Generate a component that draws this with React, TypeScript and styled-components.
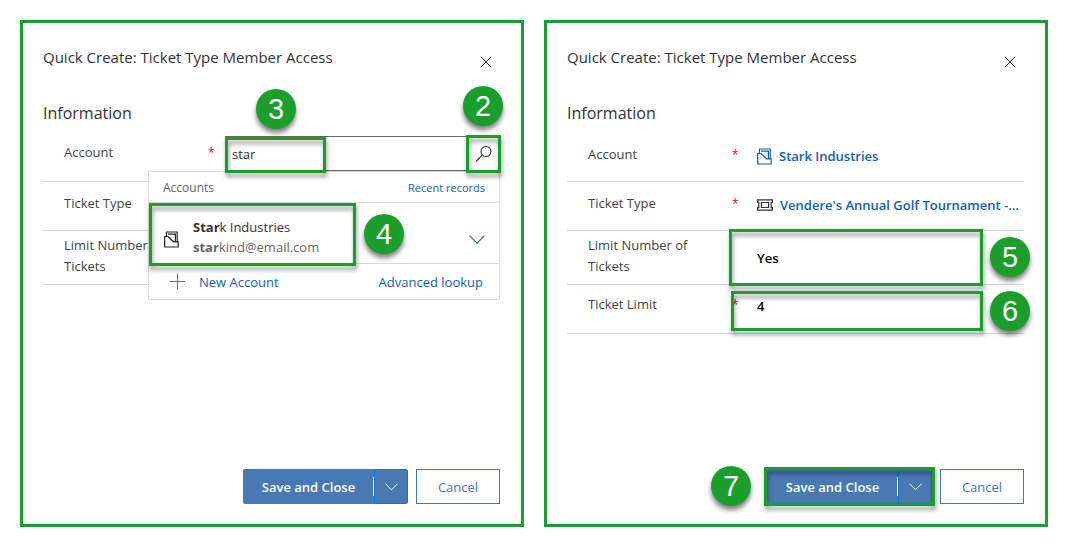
import React from "react";
import styled, { createGlobalStyle, css } from "styled-components";

const GREEN = "#1c9e2c";
const LINK = "#1160b7";
const BLUE = "#4879b3";

const GlobalStyle = createGlobalStyle`
  *, *::before, *::after { box-sizing: border-box; }
  body { margin: 0; background: #fff; }
  body, button, input, select {
    font-family: "Open Sans", "Noto Sans", sans-serif;
    font-size: 13px;
  }
`;

const Page = styled.main`
  display: grid;
  grid-template-columns: 1fr 1fr;
  gap: 20px;
  min-height: 100vh;
  padding: 20px;
`;

const Panel = styled.section`
  display: flex;
  flex-direction: column;
  min-width: 0;
  padding: 20px 21px 20px 20px;
  border: 3px solid ${GREEN};
  color: #3b3a39;
`;

const Header = styled.header`
  display: flex;
  justify-content: space-between;
  align-items: flex-start;
  padding-top: 2px;
`;

const Title = styled.h1`
  margin: 0;
  font-size: 15px;
  line-height: 24px;
  font-weight: 400;
  color: #333;
`;

const CloseButton = styled.button`
  display: grid;
  place-items: center;
  width: 28px;
  height: 28px;
  margin-top: 3px;
  padding: 0;
  border: 0;
  background: none;
`;

const SectionTitle = styled.h2`
  margin: 25px 0 8px;
  font-size: 16px;
  line-height: 24px;
  font-weight: 400;
  color: #333;
`;

const rowHeights = { normal: 49, raised: 49, tall: 54 };
const rowPaddings = { normal: 11, raised: 9, tall: 4 };

const Row = styled.div<{ $kind?: "normal" | "raised" | "tall" }>`
  position: relative;
  display: grid;
  grid-template-columns: 161px 21px minmax(0, 1fr);
  height: ${(p) => rowHeights[p.$kind ?? "normal"]}px;
  padding-top: ${(p) => rowPaddings[p.$kind ?? "normal"]}px;
  border-bottom: 1px solid #d6d6d6;
`;

const Label = styled.label`
  padding: 0 30px 0 21px;
  line-height: 21px;
  color: #444;
`;

const Required = styled.span`
  padding-left: 4px;
  font-size: 12px;
  line-height: 21px;
  color: #e00b1c;
`;

const Value = styled.div`
  display: flex;
  align-items: center;
  gap: 7px;
  height: 24px;
  padding-left: 8px;
`;

const RecordLink = styled.a`
  overflow: hidden;
  font-weight: 600;
  white-space: nowrap;
  text-decoration: none;
  color: ${LINK};
`;

const fieldText = css`
  width: 100%;
  padding: 0;
  border: 0;
  outline: 0;
  background: none;
  font-weight: 600;
  color: #000;
`;

const ChoiceField = styled.select`
  ${fieldText}
  height: 46px;
  align-self: flex-start;
  appearance: none;
`;

const NumberField = styled.input`
  ${fieldText}
  height: 22px;
`;

const SearchBox = styled.div`
  position: relative;
  display: flex;
  height: 35px;
  margin-top: -6px;
  border: 1px solid #666;
`;

const SearchInput = styled.input`
  flex: 1;
  min-width: 0;
  padding: 0 7px 0 6px;
  border: 0;
  outline: 0;
  background: none;
  color: #333;
`;

const SearchButton = styled.button`
  position: relative;
  display: grid;
  place-items: center;
  width: 33px;
  padding: 0;
  border: 0;
  background: none;
`;

const Flyout = styled.div`
  position: absolute;
  z-index: 2;
  top: 38px;
  right: 0;
  left: 105px;
  border: 1px solid #dcdcdc;
  background: #fff;
`;

const FlyoutHead = styled.div`
  display: flex;
  justify-content: space-between;
  align-items: center;
  height: 31px;
  padding: 0 14px;
  border-bottom: 1px solid #dcdcdc;
  font-size: 12px;
  color: #666;
`;

const TextLink = styled.a<{ $small?: boolean }>`
  display: flex;
  align-items: center;
  gap: 13px;
  font-size: ${(p) => (p.$small ? 11 : 13)}px;
  text-decoration: none;
  color: ${LINK};
`;

const Result = styled.div`
  position: relative;
  display: flex;
  align-items: center;
  gap: 14px;
  height: 61px;
  padding: 0 14px 0 15px;
  border-bottom: 1px solid #dcdcdc;
`;

const ResultIcon = styled.span`
  display: flex;
  padding-top: 12px;
`;

const ResultText = styled.div`
  flex: 1;
  padding-top: 8px;
  line-height: 20px;
  color: #333;
`;

const ResultDetail = styled.div`
  color: #666;
`;

const IconButton = styled.button`
  display: grid;
  place-items: center;
  padding: 12px 0 0;
  border: 0;
  background: none;
`;

const FlyoutFoot = styled.div`
  display: flex;
  justify-content: space-between;
  align-items: center;
  height: 35px;
  padding: 0 16px 0 20px;
`;

const Footer = styled.footer`
  display: flex;
  justify-content: flex-end;
  gap: 8px;
  margin-top: auto;
`;

const SplitButton = styled.div`
  position: relative;
  display: flex;
  height: 35px;
`;

const SaveButton = styled.button`
  position: relative;
  width: 131px;
  padding: 0;
  border: 0;
  border-radius: 2px 0 0 2px;
  background: ${BLUE};
  font-weight: 600;
  color: #fff;

  &::after {
    content: "";
    position: absolute;
    top: 8px;
    right: 0;
    bottom: 8px;
    width: 1px;
    background: #fff;
  }
`;

const MoreButton = styled.button`
  display: grid;
  place-items: center;
  width: 34px;
  padding: 0;
  border: 1px solid #0f74cf;
  border-radius: 0 2px 2px 0;
  background: ${BLUE};
`;

const CancelButton = styled.button`
  width: 84px;
  height: 35px;
  padding: 0;
  border: 1px solid #3b79b7;
  background: #fff;
  color: #3b79b7;
`;

const Highlight = styled.span<{ $inset: string; $width?: number }>`
  position: absolute;
  z-index: 3;
  inset: ${(p) => p.$inset};
  ${(p) => p.$width && `width: ${p.$width}px;`}
  border: 3px solid ${GREEN};
  filter: drop-shadow(1px 4px 2px rgba(0, 0, 0, 0.4));
  pointer-events: none;
`;

const Badge = styled.span<{ $inset: string }>`
  position: absolute;
  z-index: 4;
  inset: ${(p) => p.$inset};
  width: 40px;
  height: 40px;
  border-radius: 50%;
  background: ${GREEN};
  box-shadow: 0 4px 5px rgba(0, 0, 0, 0.5);
  font: 400 29px/40px "Liberation Sans", Arial, sans-serif;
  text-align: center;
  color: #fff;
`;

const CloseIcon = () => (
  <svg width="12" height="12" viewBox="0 0 12 12" fill="none" stroke="#333">
    <path d="M1 1l10 10M11 1L1 11" />
  </svg>
);

const SearchIcon = () => (
  <svg width="18" height="18" viewBox="0 0 18 18" fill="none" stroke="#333" strokeWidth="1.1">
    <circle cx="12" cy="6.5" r="5" />
    <path d="M8.5 10L2 16.5" />
  </svg>
);

const ChevronIcon = ({ width, color }: { width: number; color: string }) => (
  <svg width={width} height={width / 2 + 1} viewBox="0 0 16 9" fill="none" stroke={color} strokeWidth="1.2">
    <path d="M0.5 0.7L8 8.2L15.5 0.7" />
  </svg>
);

const PlusIcon = () => (
  <svg width="17" height="17" viewBox="0 0 17 17" fill="none" stroke="#5f6fbd">
    <path d="M8.5 0.5v16M0.5 8.5h16" />
  </svg>
);

const AccountIcon = ({ color }: { color: string }) => (
  <svg width="15" height="17" viewBox="0 0 15 17" fill="none" stroke={color} strokeWidth="1.2">
    <path d="M2.5 5.5V1H13.2V10.8" />
    <path d="M4 3.2H11.4V10.8" />
    <path d="M0.7 5.5H4.2L9.6 10.8H14.2V16H0.7z" />
  </svg>
);

const TicketIcon = () => (
  <svg width="16" height="12" viewBox="0 0 16 12" fill="none" stroke="#333" strokeWidth="1.2">
    <path d="M0.6 0.8H15.4V3.4H14.2V8.6H15.4V11.2H0.6V8.6H1.8V3.4H0.6z" />
    <path d="M4.4 3.5h7.2v5H4.4z" />
  </svg>
);

const PanelHeader = () => (
  <>
    <Header>
      <Title>Quick Create: Ticket Type Member Access</Title>
      <CloseButton type="button" aria-label="Close">
        <CloseIcon />
      </CloseButton>
    </Header>
    <SectionTitle>Information</SectionTitle>
  </>
);

const PanelFooter = ({ step }: { step?: number }) => (
  <Footer>
    <SplitButton>
      <SaveButton type="button">Save and Close</SaveButton>
      <MoreButton type="button" aria-label="More save options">
        <ChevronIcon width={13} color="#fff" />
      </MoreButton>
      {step && (
        <>
          <Highlight $inset="-2px -3px -2px -3px" />
          <Badge $inset="-3px auto auto -56px">{step}</Badge>
        </>
      )}
    </SplitButton>
    <CancelButton type="button">Cancel</CancelButton>
  </Footer>
);

const LookupPanel = () => (
  <Panel>
    <PanelHeader />
    <Row $kind="raised">
      <Label htmlFor="account-search">Account</Label>
      <Required>*</Required>
      <SearchBox>
        <SearchInput id="account-search" type="text" defaultValue="star" />
        <SearchButton type="button" aria-label="Search accounts">
          <SearchIcon />
          <Highlight $inset="-2px -2px -3px 0" />
          <Badge $inset="-51px -4px auto auto">2</Badge>
        </SearchButton>
        <Highlight $inset="0 auto -3px -1px" $width={101} />
        <Badge $inset="-48px auto auto 30px">3</Badge>
      </SearchBox>
      <Flyout>
        <FlyoutHead>
          <span>Accounts</span>
          <TextLink $small href="#recent">
            Recent records
          </TextLink>
        </FlyoutHead>
        <Result>
          <ResultIcon>
            <AccountIcon color="#222" />
          </ResultIcon>
          <ResultText>
            <div>
              <b>Star</b>k Industries
            </div>
            <ResultDetail>
              <b>star</b>kind@email.com
            </ResultDetail>
          </ResultText>
          <IconButton type="button" aria-label="Show details">
            <ChevronIcon width={16} color="#2a6fb8" />
          </IconButton>
          <Highlight $inset="0 auto -3px 0" $width={207} />
          <Badge $inset="11px auto auto 215px">4</Badge>
        </Result>
        <FlyoutFoot>
          <TextLink href="#new">
            <PlusIcon />
            New Account
          </TextLink>
          <TextLink href="#advanced">Advanced lookup</TextLink>
        </FlyoutFoot>
      </Flyout>
    </Row>
    <Row>
      <Label as="span">Ticket Type</Label>
      <Required>*</Required>
    </Row>
    <Row $kind="tall">
      <Label as="span">Limit Number of Tickets</Label>
    </Row>
    <PanelFooter />
  </Panel>
);

const FilledPanel = () => (
  <Panel>
    <PanelHeader />
    <Row>
      <Label as="span">Account</Label>
      <Required>*</Required>
      <Value>
        <AccountIcon color={LINK} />
        <RecordLink href="#account">Stark Industries</RecordLink>
      </Value>
    </Row>
    <Row>
      <Label as="span">Ticket Type</Label>
      <Required>*</Required>
      <Value>
        <TicketIcon />
        <RecordLink href="#ticket-type">Vendere's Annual Golf Tournament -...</RecordLink>
      </Value>
    </Row>
    <Row $kind="tall">
      <Label htmlFor="limit-tickets">Limit Number of Tickets</Label>
      <span />
      <Value>
        <ChoiceField id="limit-tickets" defaultValue="Yes">
          <option>Yes</option>
          <option>No</option>
        </ChoiceField>
      </Value>
      <Highlight $inset="-2px 41px -2px 162px" />
      <Badge $inset="6px -6px auto auto">5</Badge>
    </Row>
    <Row $kind="raised">
      <Label htmlFor="ticket-limit">Ticket Limit</Label>
      <Required>*</Required>
      <Value>
        <NumberField id="ticket-limit" type="text" inputMode="numeric" defaultValue="4" />
      </Value>
      <Highlight $inset="6px 41px 2px 164px" />
      <Badge $inset="6px -6px auto auto">6</Badge>
    </Row>
    <PanelFooter step={7} />
  </Panel>
);

export default function App() {
  return (
    <>
      <GlobalStyle />
      <Page>
        <LookupPanel />
        <FilledPanel />
      </Page>
    </>
  );
}
